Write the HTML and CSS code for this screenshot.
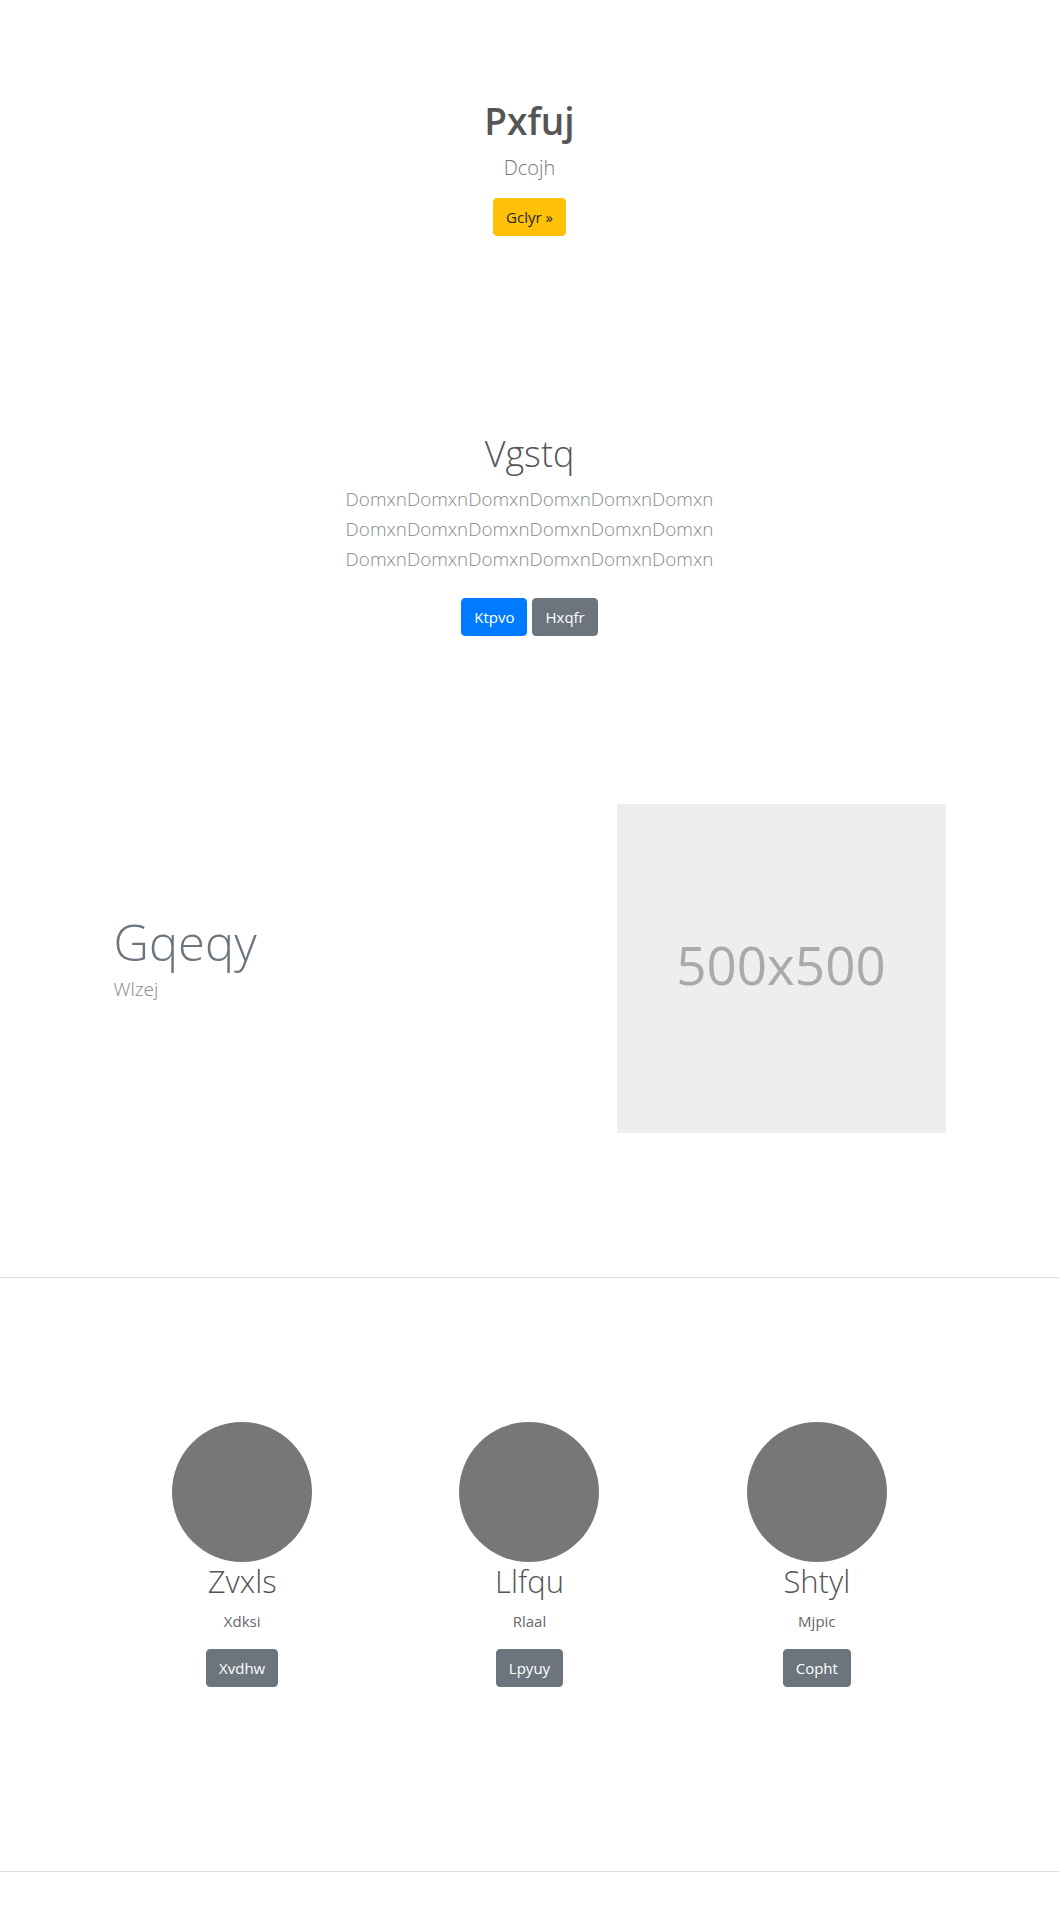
FILE: index.html
```html
<!DOCTYPE html>
<html lang="en">
<head>
<meta charset="utf-8">
<title>Pxfuj</title>
<link rel="stylesheet" href="styles.css">
</head>
<body>
<section class="hero">
  <h1 class="hero-title">Pxfuj</h1>
  <p class="hero-lead">Dcojh</p>
  <a class="btn btn-warning" href="#">Gclyr &raquo;</a>
</section>

<section class="intro">
  <h2 class="intro-title">Vgstq</h2>
  <p class="intro-text">DomxnDomxnDomxnDomxnDomxnDomxn<br>DomxnDomxnDomxnDomxnDomxnDomxn<br>DomxnDomxnDomxnDomxnDomxnDomxn</p>
  <div class="btn-row">
    <a class="btn btn-primary" href="#">Ktpvo</a>
    <a class="btn btn-secondary" href="#">Hxqfr</a>
  </div>
</section>

<section class="feature">
  <div class="container feature-row">
    <div class="feature-text">
      <h2 class="feature-title">Gqeqy</h2>
      <p class="feature-lead">Wlzej</p>
    </div>
    <div class="feature-media">
      <div class="placeholder">500x500</div>
    </div>
  </div>
</section>

<section class="team">
  <div class="container team-grid">
    <div class="member">
      <div class="avatar"></div>
      <h3 class="member-name">Zvxls</h3>
      <p class="member-role">Xdksi</p>
      <a class="btn btn-secondary" href="#">Xvdhw</a>
    </div>
    <div class="member">
      <div class="avatar"></div>
      <h3 class="member-name">Llfqu</h3>
      <p class="member-role">Rlaal</p>
      <a class="btn btn-secondary" href="#">Lpyuy</a>
    </div>
    <div class="member">
      <div class="avatar"></div>
      <h3 class="member-name">Shtyl</h3>
      <p class="member-role">Mjpic</p>
      <a class="btn btn-secondary" href="#">Copht</a>
    </div>
  </div>
</section>

<footer class="footer"></footer>
</body>
</html>
```

FILE: styles.css
```css
* { box-sizing: border-box; }

html, body {
  margin: 0;
  padding: 0;
  background: #ffffff;
}

body {
  font-family: "Open Sans", "Noto Sans", "Liberation Sans", sans-serif;
  color: #555555;
  font-size: 16px;
  line-height: 1.5;
}

h1, h2, h3, p { margin: 0; }

.container {
  width: 862px;
  margin: 0 auto;
}

/* buttons */
.btn {
  display: inline-block;
  height: 38px;
  padding: 0 12px;
  border: 1px solid transparent;
  border-radius: 4px;
  font-size: 15px;
  line-height: 36px;
  text-decoration: none;
  color: #ffffff;
  vertical-align: top;
}
.btn-warning { background: #ffc107; border-color: #ffc107; color: #212529; }
.btn-primary { background: #007bff; border-color: #007bff; }
.btn-secondary { background: #6c757d; border-color: #6c757d; }

/* hero */
.hero {
  padding-top: 99px;
  text-align: center;
}
.hero-title {
  font-size: 37px;
  line-height: 43px;
  font-weight: 600;
  color: #555555;
}
.hero-lead {
  margin-top: 11px;
  font-size: 20px;
  line-height: 30px;
  font-weight: 300;
  color: #777777;
}
.hero .btn { margin-top: 15px; }

/* intro */
.intro {
  padding-top: 196px;
  text-align: center;
}
.intro-title {
  font-size: 36px;
  line-height: 43px;
  font-weight: 300;
  color: #555555;
}
.intro-text {
  margin-top: 9px;
  font-size: 18.8px;
  line-height: 30px;
  font-weight: 300;
  color: #888888;
}
.btn-row {
  margin-top: 24px;
  display: flex;
  justify-content: center;
  gap: 5px;
}

/* feature */
.feature {
  padding-top: 168px;
  padding-bottom: 144px;
  border-bottom: 1px solid #dedede;
}
.feature-row {
  display: grid;
  grid-template-columns: 1fr 1fr;
}
.feature-text {
  padding: 108px 15px 0;
}
.feature-title {
  font-size: 49px;
  line-height: 60px;
  font-weight: 300;
  color: #6c757d;
}
.feature-lead {
  margin-top: 2px;
  font-size: 19px;
  line-height: 30px;
  font-weight: 300;
  color: #888888;
}
.feature-media {
  padding: 0 15px;
  display: flex;
  justify-content: flex-end;
}
.placeholder {
  width: 329px;
  height: 329px;
  padding-bottom: 8px;
  background: #eeeeee;
  color: #aaaaaa;
  font-size: 53px;
  display: flex;
  align-items: center;
  justify-content: center;
}

/* team */
.team {
  padding-top: 144px;
  padding-bottom: 184px;
  border-bottom: 1px solid #dedede;
}
.team-grid {
  display: grid;
  grid-template-columns: repeat(3, 1fr);
}
.member {
  display: flex;
  flex-direction: column;
  align-items: center;
  text-align: center;
}
.avatar {
  width: 140px;
  height: 140px;
  border-radius: 50%;
  background: #777777;
}
.member-name {
  font-size: 31px;
  line-height: 38px;
  font-weight: 300;
  color: #555555;
}
.member-role {
  margin-top: 10px;
  font-size: 15px;
  line-height: 22px;
  color: #666666;
}
.member .btn { margin-top: 17px; }

.footer {
  height: 48px;
}
```
